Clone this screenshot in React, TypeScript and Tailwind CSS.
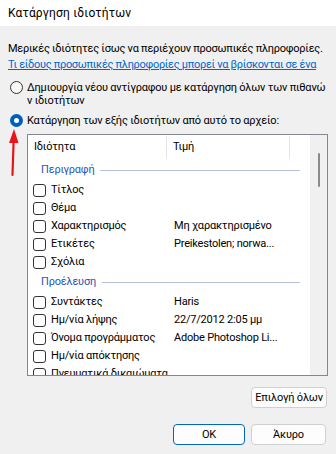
import React from 'react';

const groups = [
  {
    name: 'Περιγραφή',
    rows: [
      { label: 'Τίτλος', value: '' },
      { label: 'Θέμα', value: '' },
      { label: 'Χαρακτηρισμός', value: 'Μη χαρακτηρισμένο' },
      { label: 'Ετικέτες', value: 'Preikestolen; norwa...' },
      { label: 'Σχόλια', value: '' },
    ],
  },
  {
    name: 'Προέλευση',
    rows: [
      { label: 'Συντάκτες', value: 'Haris' },
      { label: 'Ημ/νία λήψης', value: '22/7/2012 2:05 μμ' },
      { label: 'Όνομα προγράμματος', value: 'Adobe Photoshop Li...' },
      { label: 'Ημ/νία απόκτησης', value: '' },
      { label: 'Πνευματικά δικαιώματα', value: '' },
    ],
  },
];

function Checkbox() {
  return <span className="block w-[13px] h-[13px] shrink-0 rounded-[3px] border border-[#333333] bg-white" />;
}

export default function App() {
  return (
    <div
      className="relative w-[336px] h-[454px] bg-[#f0f0f0] text-[11px] tracking-[-0.2px] text-black overflow-hidden flex flex-col whitespace-nowrap"
      style={{ fontFamily: 'Roboto, "Liberation Sans", sans-serif' }}
    >
      {/* Title bar */}
      <div className="h-[26px] shrink-0 bg-white flex items-center px-2 leading-none text-[12px] tracking-[0.2px]">Κατάργηση ιδιοτήτων</div>

      <div className="flex flex-col pl-2 shrink-0">
        <p className="mt-[15px] leading-[16px] tracking-[-0.25px]">Μερικές ιδιότητες ίσως να περιέχουν προσωπικές πληροφορίες.</p>
        <p className="leading-[16px] text-[#0066cc] underline tracking-[-0.3px]">
          Τι είδους προσωπικές πληροφορίες μπορεί να βρίσκονται σε ένα
        </p>

        {/* Radio 1 */}
        <div className="mt-[8px] flex items-start gap-[4px]">
          <span className="ml-[2px] block w-[13px] h-[13px] rounded-full border border-[#333333] bg-[#f7f7f7] shrink-0" />
          <span className="leading-[13px]">
            Δημιουργία νέου αντίγραφου με κατάργηση όλων των πιθανώ
            <br />ν ιδιοτήτων
          </span>
        </div>

        {/* Radio 2 */}
        <div className="mt-[7px] flex items-center gap-[4px] leading-[13px]">
          <span className="ml-[2px] w-[13px] h-[13px] rounded-full bg-[#005fb8] flex items-center justify-center shrink-0">
            <span className="block w-[5px] h-[5px] rounded-full bg-white" />
          </span>
          <span>Κατάργηση των εξής ιδιοτήτων από αυτό το αρχείο:</span>
        </div>

        {/* List */}
        <div className="mt-[7px] ml-[19px] w-[301px] h-[242px] border border-[#828790] bg-white flex overflow-hidden">
          <div className="flex-1 flex flex-col">
            <div className="h-[24px] shrink-0 flex items-stretch">
              <div className="w-[139px] flex items-center pl-[6px] border-r border-[#e5e5e5] my-[1px]">Ιδιότητα</div>
              <div className="w-[123px] flex items-center pl-[6px] border-r border-[#e5e5e5] my-[1px]">Τιμή</div>
            </div>
            {groups.map((g) => (
              <div key={g.name} className="flex flex-col shrink-0">
                <div className="h-[22px] flex items-center pl-[13px] pr-[10px]">
                  <span className="text-[#2a56b8]">{g.name}</span>
                  <span className="flex-1 h-px bg-[#b4c1dd] ml-[6px]" />
                </div>
                {g.rows.map((r) => (
                  <div key={r.label} className="h-[18px] shrink-0 flex items-center">
                    <div className="w-[140px] flex items-center pl-[5px] gap-[5px]">
                      <Checkbox />
                      <span>{r.label}</span>
                    </div>
                    <span className="pl-[6px]">{r.value}</span>
                  </div>
                ))}
              </div>
            ))}
          </div>
          {/* Scrollbar */}
          <div className="w-[17px] shrink-0 bg-[#f0f0f0] flex justify-center">
            <span className="block mt-[18px] w-[2px] h-[34px] rounded-full bg-[#8a8a8a]" />
          </div>
        </div>

        <div className="mt-[11px] pr-[9px] flex justify-end">
          <button className="w-[76px] h-[21px] rounded-[4px] border border-[#d0d0d0] bg-[#fdfdfd] leading-none">
            Επιλογή όλων
          </button>
        </div>

        <div className="mt-[16px] pr-[10px] flex justify-end gap-[6px]">
          <button className="w-[72px] h-[21px] rounded-[4px] border border-[#0067c0] bg-[#fdfdfd] leading-none">OK</button>
          <button className="w-[75px] h-[21px] rounded-[4px] border border-[#d0d0d0] bg-[#fdfdfd] leading-none">Άκυρο</button>
        </div>
      </div>

      {/* Red annotation arrow */}
      <svg className="absolute left-[6px] top-[127px]" width="16" height="50" viewBox="0 0 16 50">
        <path d="M6.5 48 L7.6 14" stroke="#e8141c" strokeWidth="2.2" strokeLinecap="round" fill="none" />
        <path d="M8 2 L3 16 L12.5 16 Z" fill="#e8141c" />
      </svg>
    </div>
  );
}
